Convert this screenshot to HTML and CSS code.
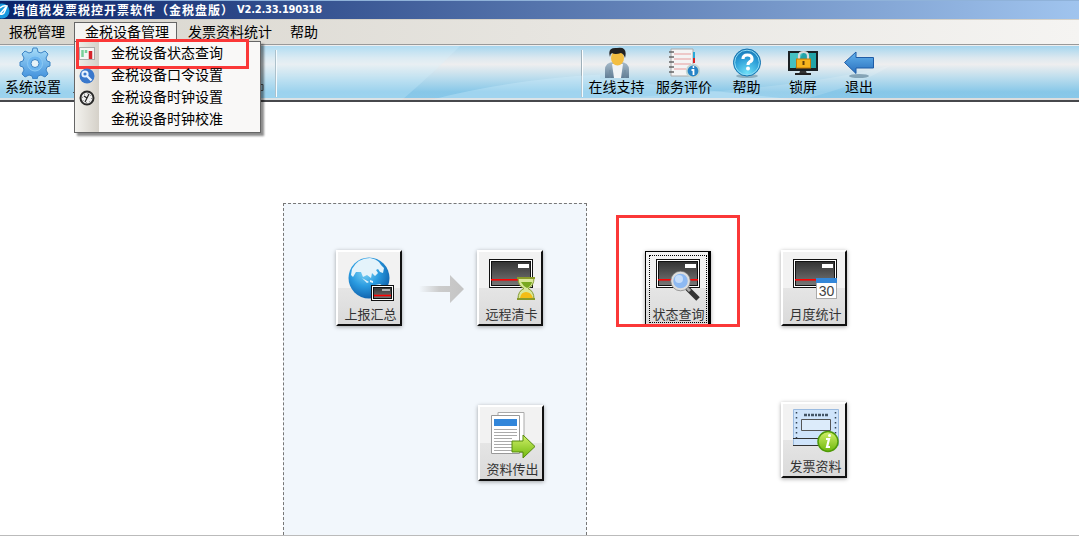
FILE: index.html
```html
<!DOCTYPE html>
<html lang="zh-CN">
<head>
    <meta charset="UTF-8">
    <title>增值税发票税控开票软件</title>
    <link rel="stylesheet" href="styles.css">
</head>
<body>

    <!-- 公用图形 -->
    <svg class="defs" width="0" height="0">
        <defs>
            <linearGradient id="gBlue" x1="0" y1="0" x2="0" y2="1"><stop offset="0" stop-color="#a6dcf8"/><stop offset="1" stop-color="#3f8fdc"/></linearGradient>
            <linearGradient id="gArrow" x1="0" y1="0" x2="0" y2="1"><stop offset="0" stop-color="#63b4ee"/><stop offset="1" stop-color="#2a6fbd"/></linearGradient>
            <radialGradient id="gHelp" cx=".5" cy=".9" r=".9"><stop offset="0" stop-color="#6fe0f8"/><stop offset=".6" stop-color="#2d9fd8"/><stop offset="1" stop-color="#1675b5"/></radialGradient>
            <radialGradient id="gGlobe" cx=".4" cy=".35" r=".7"><stop offset="0" stop-color="#7fd4f5"/><stop offset=".5" stop-color="#2a9be0"/><stop offset="1" stop-color="#0d5ca8"/></radialGradient>
            <linearGradient id="gCard" x1="0" y1="0" x2="0" y2="1"><stop offset="0" stop-color="#333"/><stop offset="1" stop-color="#777"/></linearGradient>
            <linearGradient id="gGreen" x1="0" y1="0" x2="0" y2="1"><stop offset="0" stop-color="#d2f06a"/><stop offset="1" stop-color="#6fb80c"/></linearGradient>
            <linearGradient id="gSuit" x1="0" y1="0" x2="0" y2="1"><stop offset="0" stop-color="#a9bccb"/><stop offset="1" stop-color="#607c94"/></linearGradient>
            <linearGradient id="gFade" x1="0" y1="0" x2="1" y2="0"><stop offset="0" stop-color="#ccc" stop-opacity="0"/><stop offset=".45" stop-color="#ccc"/><stop offset="1" stop-color="#c4c4c4"/></linearGradient>
            <symbol id="card" viewBox="0 0 44 30">
                <rect x=".5" y=".5" width="43" height="28" fill="#fff" stroke="#111"/>
                <rect x="2.500" y="2.500" width="39" height="24" fill="url(#gCard)" stroke="#111"/>
                <rect x="29" y="5" width="11" height="4" fill="#fff"/>
                <rect x="2" y="20" width="40" height="1.600" fill="#f00"/>
            </symbol>
        </defs>
    </svg>

    <!-- 标题栏 -->
    <header class="title-bar">
        <svg class="logo" width="10" height="17" viewBox="0 0 10 17"><circle cx="2" cy="9" r="7.500" fill="#1899df"/><path d="M0 6Q3 3 7 4L4 11Q2 13 0 12M0 12L6 5" fill="none" stroke="#fff" stroke-width="1.500"/></svg>
        <h1>增值税发票税控开票软件（金税盘版）</h1>
        <span class="version">V2.2.33.190318</span>
    </header>

    <!-- 菜单栏 -->
    <nav class="menu-bar">
        <div class="menu">报税管理</div>
        <div class="menu open">金税设备管理
            <ul class="dropdown">
                <li class="marked">
                    <svg width="16" height="16" viewBox="0 0 16 16"><rect x=".5" y="1.500" width="15" height="12" fill="#f5f5f5" stroke="#aaa"/><path d="M3.500 4v7M7 4v3" stroke="#7ad09b" stroke-width="2.500"/><path d="M11.500 5v8" stroke="#d6252c" stroke-width="3.500"/></svg>
                    金税设备状态查询
                </li>
                <li>
                    <svg width="16" height="16" viewBox="0 0 16 16"><circle cx="8" cy="8" r="7.500" fill="#3a78cc"/><circle cx="6" cy="6" r="2.600" fill="none" stroke="#e8f2ff" stroke-width="2"/><path d="M8 8l4.500 4.500" stroke="#e8f2ff" stroke-width="2.200"/></svg>
                    金税设备口令设置
                </li>
                <li>
                    <svg width="16" height="16" viewBox="0 0 16 16"><circle cx="8" cy="8" r="6.500" fill="#eee" stroke="#292929" stroke-width="2"/><circle cx="8" cy="8" r="4.500" fill="none" stroke="#666" stroke-dasharray="1 2.500"/><path d="M6 12L10 4M5 6l3 2" stroke="#222" stroke-width="1.200"/></svg>
                    金税设备时钟设置
                </li>
                <li>金税设备时钟校准</li>
            </ul>
        </div>
        <div class="menu">发票资料统计</div>
        <div class="menu">帮助</div>
    </nav>

    <!-- 工具栏 -->
    <section class="tool-bar">
        <svg class="swoosh" viewBox="0 0 1079 55" preserveAspectRatio="none">
            <path d="M0 0H460Q435 26 402 55H0z" fill="#d8f2ff" opacity=".25"/>
            <path d="M430 55Q510 34 600 29V33Q660 40 800 55z" fill="#d8f2ff" opacity=".3"/>
            <path d="M560 55Q780 48 890 20Q860 40 800 55z" fill="#fff" opacity=".15"/>
        </svg>
        <div class="tool settings">
            <svg width="32" height="32" viewBox="0 0 32 32">
                <path d="M14 1h4l1 4 3 1 4-2 3 3-2 4 1 3 3 1v4l-3 1-1 3 2 4-3 3-4-2-3 1-1 3h-4l-1-3-3-1-4 2-3-3 2-4-1-3-3-1v-4l3-1 1-3-2-4 3-3 4 2 3-1z" fill="url(#gBlue)" stroke="#3c83c4" stroke-linejoin="round"/>
                <circle cx="16" cy="16.500" r="7.500" fill="#6cb5ef" stroke="#8ccaf5"/><circle cx="16" cy="16.500" r="4" fill="#e8f3f8" stroke="#3c83c4"/>
            </svg>
            <span>系统设置</span>
        </div>
        <svg class="covered" width="192" height="16" viewBox="0 0 192 16"><path d="M0 12.500h2M186 4.500h4v6h-4" fill="none" stroke="#222"/></svg>
        <i class="divider"></i>
        <i class="divider second"></i>
        <div class="tool support">
            <svg width="32" height="32" viewBox="0 0 32 32">
                <path d="M4 31V23Q4 15 13 15h6q9 0 9 8v8z" fill="url(#gSuit)"/><path d="M11 17l2 14h7l2-14z" fill="#f0f3f5"/><path d="M9 23v8M24 23v8" stroke="#6f899d"/>
                <ellipse cx="16.500" cy="11" rx="6.500" ry="7.500" fill="#f3be42"/><path d="M9 10Q6 0 16 1Q27-1 24 11Q23 7 20 6Q14 8 11 6Q9 7 9 10z" fill="#222"/>
            </svg>
            <span>在线支持</span>
        </div>
        <div class="tool review">
            <svg width="32" height="32" viewBox="0 0 32 32">
                <path d="M3 2h22v27H3z" fill="#f4f4f4" stroke="#aaa"/><path d="M25 5h2v6h-2z" fill="#27a9d8"/><path d="M25 11h2v5h-2z" fill="#d22"/>
                <path d="M6 7h17M6 12h17M6 17h17M6 22h12" stroke="#e79c9c"/><path d="M1 5h5M1 10h5M1 15h5M1 20h5M1 25h5" stroke="#666" stroke-width="1.500"/>
                <circle cx="25" cy="24" r="6.300" fill="#2684c6" stroke="#c4d7d4" stroke-width="1.800"/><path d="M23.500 23h2v5M24.700 20h1.500" stroke="#fff" stroke-width="1.800" fill="none"/>
            </svg>
            <span>服务评价</span>
        </div>
        <div class="tool help">
            <svg width="32" height="32" viewBox="0 0 32 32"><ellipse cx="16" cy="29" rx="11" ry="2" fill="#5b7f91" opacity=".5"/><circle cx="16" cy="15.500" r="13.500" fill="url(#gHelp)" stroke="#1674b0"/><circle cx="16" cy="15.500" r="12.300" fill="none" stroke="#8fdcf5"/><path d="M12 12Q12 8 16.500 8Q21 8 21 12Q21 14 18.500 15Q17 16 17 18" fill="none" stroke="#fff" stroke-width="3.200"/><circle cx="17" cy="21.500" r="2" fill="#fff"/></svg>
            <span>帮助</span>
        </div>
        <div class="tool lock">
            <svg width="32" height="32" viewBox="0 0 32 32"><path d="M1 4h30v20H1z" fill="#1b2023"/><path d="M3 6h26v15H3z" fill="#22a3a8"/><path d="M3 6h13L8 21H3z" fill="#45c0c0"/><path d="M13 24h6l1 3h-8z" fill="#333"/><path d="M8 27h16" stroke="#222" stroke-width="2"/><path d="M12 13V9q0-4 4.500-4T21 9v4" fill="none" stroke="#d9dcdc" stroke-width="2.200"/><rect x="9.500" y="12" width="14" height="9" fill="#f6b51d" stroke="#c57a07"/><path d="M16.500 14v4" stroke="#60400b" stroke-width="2"/></svg>
            <span>锁屏</span>
        </div>
        <div class="tool exit">
            <svg width="32" height="32" viewBox="0 0 32 32"><ellipse cx="16" cy="29" rx="10" ry="2" fill="#55798f" opacity=".6"/><path d="M1.500 15.500L13 5v5.500h17.500v10.500H13v5.500z" fill="url(#gArrow)" stroke="#1f5ca6"/></svg>
            <span>退出</span>
        </div>
    </section>

    <!-- 流程区 -->
    <main class="workspace">
        <div class="flow">
            <div class="flow-row">
                <button class="tile">
                    <svg width="60" height="52" viewBox="0 0 60 52">
                        <circle cx="30" cy="26" r="20.500" fill="url(#gGlobe)"/>
                        <path d="M13 17Q19 6 31 6Q37 7 40 10L42 13L45 16L44 21L41 20L39 17L37 18L39 21L36 24L33 21L32 26L28 23L24 25L22 20L17 20L14 25L12 23zM33 37l3-4 5-1 3 2-2 4-6 2zM23 26l5 5 2-1M31 28l3 1v2l-3-1z" fill="#e4f3fb"/>
                        <rect x="32" y="33" width="23" height="16" fill="#111"/><rect x="33" y="34" width="21" height="14" fill="#fff"/>
                        <rect x="34.500" y="35.500" width="18" height="11" fill="url(#gCard)" stroke="#111"/><path d="M43 38h8" stroke="#fff" stroke-width="1.200"/><path d="M35 43.500h17" stroke="#f00" stroke-width="1.600"/>
                    </svg>
                    <span>上报汇总</span>
                </button>
                <svg class="arrow" width="46" height="28" viewBox="0 0 46 28"><path d="M0 11h31V0l14 14-14 14V17H0z" fill="url(#gFade)"/></svg>
                <button class="tile">
                    <svg width="60" height="52" viewBox="0 0 60 52">
                        <use href="#card" x="9" y="7" width="44" height="30"/>
                        <path d="M38 26h16q0 8-6 10.500Q54 39 54 47H38q0-8 6-10.500Q38 34 38 26z" fill="#d9e79a" stroke="#849b32"/><path d="M41 30h11q-1 4-5 6-4-2-6-6z" fill="#78a820"/><path d="M40 46q1-6 6-6t7 6z" fill="#f3bd15"/><path d="M37 26h18M37 47h18" stroke="#8a9b2a" stroke-width="2"/>
                    </svg>
                    <span>远程清卡</span>
                </button>
            </div>
            <button class="tile export">
                <svg width="60" height="52" viewBox="0 0 60 52">
                    <path d="M17 5.500h26v40H17z" fill="#fff" stroke="#aaa"/><path d="M10.500 8.500h28v38h-28z" fill="#fff" stroke="#999"/><path d="M13 12h23v7H13z" fill="#3286da"/><path d="M13 22.500h23M13 25.500h23M13 28.500h23M13 31.500h18M13 34.500h18M13 37.500h18M13 40.500h18M13 43.500h20" stroke="#aaa"/>
                    <path d="M31 34h11v-6l12 11.500L42 51v-6H31z" fill="url(#gGreen)" stroke="#568b0c"/>
                </svg>
                <span>资料传出</span>
            </button>
        </div>

        <div class="side">
            <div class="picked">
                <button class="tile focused">
                    <svg width="60" height="52" viewBox="0 0 60 52">
                        <use href="#card" x="9" y="7" width="44" height="30"/>
                        <path d="M40 36l11 11" stroke="#333" stroke-width="5"/><path d="M39 35l4 4" stroke="#aaa" stroke-width="3"/><circle cx="33.500" cy="29" r="8.500" fill="#8db9f2" stroke="#ddd" stroke-width="2.500"/><circle cx="33.500" cy="29" r="9.800" fill="none" stroke="#777" stroke-width=".7"/><circle cx="32" cy="27" r="4" fill="#c6ddfa"/>
                    </svg>
                    <span>状态查询</span>
                </button>
            </div>
            <div class="reports">
                <button class="tile">
                    <svg width="60" height="52" viewBox="0 0 60 52">
                        <use href="#card" x="9" y="7" width="44" height="30"/>
                        <rect x="32.500" y="26.500" width="20" height="20" fill="#fff" stroke="#aaa"/><path d="M32 26h21v5H32z" fill="#3487d8"/><text x="42.500" y="44" text-anchor="middle" class="day">30</text>
                    </svg>
                    <span>月度统计</span>
                </button>
                <button class="tile">
                    <svg width="60" height="52" viewBox="0 0 60 52">
                        <path d="M9.500 5.500h45v36h-45z" fill="#cfe4fb" stroke="#9bbbe0"/><path d="M12.500 8v30M51.500 8v30" stroke="#345" stroke-width="1.500" stroke-dasharray="1.500 3.500"/><path d="M20 11h25" stroke="#456" stroke-width="2.500" stroke-dasharray="3 1 2 1"/><path d="M17.500 15.500h29v11h-29z" fill="#dcebfa" stroke="#555"/><path d="M9 34.500h26M9 41.500h26" stroke="#333"/>
                        <circle cx="44" cy="37.500" r="10" fill="url(#gGreen)" stroke="#4f9a08" stroke-width="1.500"/><path d="M42 35h3l-2 8h3" fill="none" stroke="#fff" stroke-width="2.200"/><circle cx="45.500" cy="31.500" r="1.500" fill="#fff"/>
                    </svg>
                    <span>发票资料</span>
                </button>
            </div>
        </div>
    </main>

</body>
</html>
```
FILE: styles.css
```css
*,
*::after {
    box-sizing: border-box;
}

body {
    margin: 0;
    width: 1079px;
    height: 536px;
    overflow: hidden;
    display: flex;
    flex-direction: column;
    background-color: #fff;
    border-bottom: 1px solid #bbb;
    color: #000;
    font-family: "Noto Sans CJK SC", sans-serif;
    font-size: 14px;
}

.defs {
    position: absolute;
}

/* 标题栏 */
.title-bar {
    display: flex;
    align-items: center;
    flex: 0 0 19px;
    border-top: 1px solid #8fb2d9;
    background: linear-gradient(90deg, #0a246a 0%, #a0c4ee 100%);
    color: #fff;
    white-space: nowrap;
}

.title-bar h1 {
    margin: 0 0 0 3px;
    width: 224px;
    font-size: 12px;
    line-height: 16px;
    letter-spacing: 1px;
}

.version {
    font: bold 11px/18px "DejaVu Sans Condensed", sans-serif;
    letter-spacing: -0.2px;
}

/* 菜单栏 */
.menu-bar {
    display: flex;
    align-items: flex-end;
    flex: 0 0 26px;
    border-top: 1px solid #d5d1c8;
    border-bottom: 1px solid #999;
    background: linear-gradient(90deg, #d8d5cd, #f5f4f2);
    line-height: 17px;
}

.menu {
    position: relative;
    height: 22px;
    padding: 0 9px 0 10px;
    border: 1px solid transparent;
    border-bottom: 0;
    white-space: nowrap;
}

.menu:first-child {
    width: 74px;
    padding: 0 0 0 8px;
}

.menu:last-child {
    padding-left: 7px;
}

.menu.open {
    width: 103px;
    border-color: #666;
    background-color: #f5f4f2;
}

/* 下拉菜单 */
.dropdown {
    position: absolute;
    z-index: 5;
    top: 18px;
    left: -1px;
    width: 187px;
    height: 92px;
    margin: 0;
    padding: 0;
    border: 1px solid #666;
    background: linear-gradient(90deg, #f3f2ee, #d5d1c9 24px, #f9f8f7 24px);
    box-shadow: 3px 3px 2px rgba(0, 0, 0, 0.45);
    list-style: none;
}

.dropdown li {
    position: relative;
    display: flex;
    align-items: center;
    gap: 16px;
    height: 22px;
    padding: 0 0 2px 4px;
}

.dropdown li svg {
    margin-top: 4px;
}

.dropdown li:last-child {
    padding-left: 36px;
}

.marked::after {
    content: "";
    position: absolute;
    top: -3px;
    left: 1px;
    width: 173px;
    height: 30px;
    border: 3px solid #fb3838;
}

/* 工具栏 */
.tool-bar {
    position: relative;
    display: flex;
    flex: 0 0 57px;
    border-top: 1px solid #eee;
    border-bottom: 2px solid #47484c;
    background: linear-gradient(#a5d5ee 0%, #dce8ef 22%, #eeeeef 34%, #b9dced 60%, #87c7e8 85%, #89c8e9 96%, #ddd 97%);
}

.swoosh {
    position: absolute;
    inset: 0;
    width: 100%;
    height: 100%;
}

.tool {
    position: relative;
    display: flex;
    flex-direction: column;
    align-items: center;
    padding-top: 1px;
    line-height: 15px;
    white-space: nowrap;
}

.tool svg {
    flex: none;
}

.settings {
    width: 66px;
}

.settings svg {
    margin-left: 4px;
}

.covered {
    margin: 34px 0 0 7px;
}

.divider {
    width: 2px;
    height: 47px;
    margin: 4px 0 0 10px;
    border-left: 1px solid #9fb0ba;
    border-right: 1px solid #fff;
}

.divider.second {
    margin-left: 304px;
}

.support {
    width: 67px;
}

.review {
    width: 68px;
}

.help {
    width: 57px;
}

.lock,
.exit {
    width: 56px;
}

/* 流程区 */
.workspace {
    display: flex;
    flex: 1;
    min-height: 0;
    padding: 101px 0 0 283px;
}

.flow {
    width: 304px;
    padding: 46px 0 0 52px;
    border: 1px dashed #777;
    border-bottom: 0;
    background-color: #f2f7fc;
}

.flow-row {
    display: flex;
    align-items: center;
}

.arrow {
    margin: 2px 12px 0 17px;
}

.export {
    margin: 79px 0 0 142px;
}

/* 图标按钮 */
.tile {
    display: flex;
    flex-direction: column;
    align-items: center;
    width: 66px;
    height: 76px;
    padding: 0;
    border: 2px solid;
    border-color: #fff #111 #111 #fff;
    background: linear-gradient(#f2f2f2 50%, #e5e5e5 50%, #dadada);
    box-shadow: 0 1px 4px rgba(0, 0, 0, 0.35);
    color: #333;
    font-family: inherit;
    font-size: 13px;
    line-height: 20px;
    white-space: nowrap;
}

.tile svg {
    flex: none;
    margin-left: -1px;
}

.tile span {
    margin-left: 3px;
}

.day {
    font: 14px "Liberation Sans", sans-serif;
    fill: #444;
}

.side {
    display: flex;
    align-items: flex-start;
}

/* 红框标注的按钮 */
.picked {
    width: 124px;
    height: 112px;
    margin: 12px 0 0 29px;
    padding: 33px 0 0 26px;
    overflow: hidden;
    border: 3px solid #fb3838;
}

.focused {
    border-color: #000;
    border-width: 1px 3px 2px 1px;
    outline: 1px dotted #000;
    outline-offset: -5px;
}

.reports {
    display: flex;
    flex-direction: column;
    gap: 76px;
    margin: 47px 0 0 41px;
}
```
